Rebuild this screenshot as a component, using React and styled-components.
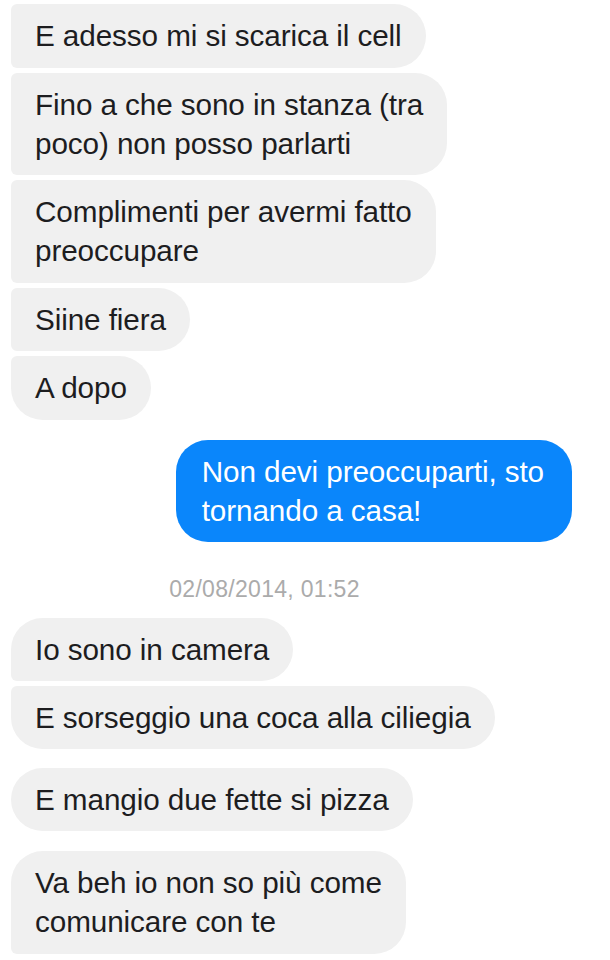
import React from "react";
import styled, { createGlobalStyle } from "styled-components";

const Global = createGlobalStyle`
  html, body { margin: 0; padding: 0; background: #ffffff; }
  body { font-family: "Liberation Sans", Arial, sans-serif; }
`;

const Thread = styled.div`
  display: flex;
  flex-direction: column;
  width: 610px;
  min-height: 960px;
  box-sizing: border-box;
  padding: 4px 0 0 11px;
  background: #ffffff;
`;

const Group = styled.div`
  display: flex;
  flex-direction: column;
  gap: ${(p) => p.$gap ?? 5}px;
  margin-top: ${(p) => p.$top ?? 0}px;
`;

const Row = styled.div`
  display: flex;
  justify-content: ${(p) => (p.$mine ? "flex-end" : "flex-start")};
  padding-right: ${(p) => (p.$mine ? 38 : 0)}px;
`;

const Bubble = styled.div`
  display: flex;
  flex-direction: column;
  padding: 12.25px ${(p) => (p.$mine ? 28 : 24)}px 12.25px ${(p) => (p.$mine ? 26 : 24)}px;
  font-size: 29.7px;
  line-height: 39px;
  letter-spacing: -0.1px;
  white-space: nowrap;
  color: ${(p) => (p.$mine ? "#ffffff" : "#1d1d1f")};
  background: ${(p) => (p.$mine ? "#0a86fb" : "#f0f0f0")};
  border-radius: ${(p) =>
    p.$mine
      ? "32px"
      : `${p.$first ? 32 : 6}px 32px 32px ${p.$last ? 32 : 6}px`};
`;

const Line = styled.span`
  display: block;
`;

const Stamp = styled.div`
  display: flex;
  justify-content: center;
  padding-right: 92px;
  margin-top: ${(p) => p.$top}px;
  font-size: 23px;
  line-height: 25px;
  color: #ababab;
  letter-spacing: 0.3px;
`;

const Msg = ({ lines, mine, first, last }) => (
  <Row $mine={mine}>
    <Bubble $mine={mine} $first={first} $last={last}>
      {lines.map((l, i) => (
        <Line key={i}>{l}</Line>
      ))}
    </Bubble>
  </Row>
);

export default function App() {
  return (
    <>
      <Global />
      <Thread>
        <Group>
          <Msg lines={["E adesso mi si scarica il cell"]} />
          <Msg lines={["Fino a che sono in stanza (tra", "poco) non posso parlarti"]} />
          <Msg lines={["Complimenti per avermi fatto", "preoccupare"]} />
          <Msg lines={["Siine fiera"]} />
          <Msg last lines={["A dopo"]} />
        </Group>
        <Group $top={20}>
          <Msg mine lines={["Non devi preoccuparti, sto", "tornando a casa!"]} />
        </Group>
        <Stamp $top={34.5}>02/08/2014, 01:52</Stamp>
        <Group $top={16} $gap={4.5}>
          <Msg first lines={["Io sono in camera"]} />
          <Msg last lines={["E sorseggio una coca alla ciliegia"]} />
        </Group>
        <Group $top={18.5}>
          <Msg first last lines={["E mangio due fette si pizza"]} />
        </Group>
        <Group $top={20}>
          <Msg first lines={["Va beh io non so più come", "comunicare con te"]} />
        </Group>
      </Thread>
    </>
  );
}
